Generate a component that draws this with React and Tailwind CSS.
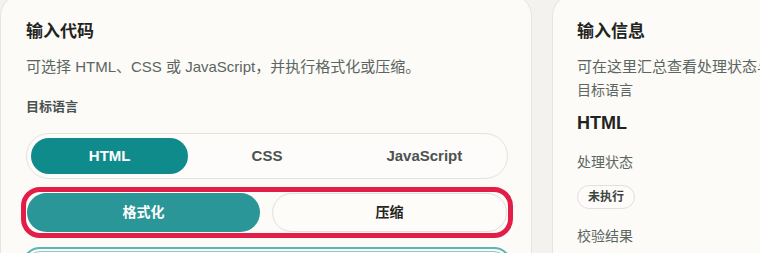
import React from "react";

export default function App() {
  const font = "font-['Liberation_Sans','Noto_Sans_CJK_SC',sans-serif]";
  return (
    <div className={`w-[760px] h-[253px] overflow-hidden bg-[#f3f2ee] ${font}`}>
      <div className="flex gap-[20px] -mt-[6px]">
        {/* Left card */}
        <div className="w-[532px] shrink-0 h-[300px] rounded-[22px] border border-[#e7e5df] bg-[#fcfbf8] px-[25px] pt-[24px]">
          <h2 className="text-[17px] leading-[26px] font-bold text-[#1f2421]">输入代码</h2>
          <p className="mt-[10px] text-[15px] leading-[24px] text-[#5b6561]">
            可选择 HTML、CSS 或 JavaScript，并执行格式化或压缩。
          </p>
          <div className="mt-[18px] text-[13px] leading-[20px] font-semibold text-[#4a524f]">目标语言</div>
          <div className="mt-[16px] w-[482px] rounded-full border border-[#e4e2dc] bg-[#fdfcfa] p-[4px] grid grid-cols-3">
            <button className="h-[36px] rounded-full bg-[#108b8c] text-white text-[15px] font-bold">HTML</button>
            <button className="h-[36px] rounded-full text-[#4b5350] text-[15px] font-bold">CSS</button>
            <button className="h-[36px] rounded-full text-[#4b5350] text-[15px] font-bold">JavaScript</button>
          </div>
          <div className="mt-[13px] w-[482px] flex gap-[12px] p-[1px] rounded-[14px] outline-[5px] outline-solid outline-[#e11d48]">
            <button className="flex-1 h-[39px] rounded-full bg-[#2a9697] text-white text-[14px] font-bold">格式化</button>
            <button className="flex-1 h-[39px] rounded-full border border-[#e2e0da] bg-[#fdfcf9] text-[#1f2421] text-[14px] font-bold">压缩</button>
          </div>
          <div className="mt-[18px] w-[482px] h-[120px] rounded-[14px] border border-[#8ccaca] bg-[#fdfcfa] outline-2 outline-solid outline-offset-2 outline-[#5fb4b4]"></div>
        </div>

        {/* Right card */}
        <div className="w-[300px] shrink-0 h-[300px] rounded-[22px] border border-[#e7e5df] bg-[#fcfbf8] pl-[24px] pt-[24px] overflow-hidden">
          <h2 className="text-[17px] leading-[26px] font-bold text-[#1f2421]">输入信息</h2>
          <p className="mt-[10px] text-[15px] leading-[24px] text-[#5b6561] whitespace-nowrap">
            可在这里汇总查看处理状态与校验结果。
          </p>
          <div className="mt-[1px] text-[14px] leading-[20px] text-[#5d6662]">目标语言</div>
          <div className="mt-[10px] text-[18px] leading-[26px] font-bold text-[#1f2421]">HTML</div>
          <div className="mt-[16px] text-[14px] leading-[20px] text-[#5d6662]">处理状态</div>
          <div className="mt-[13px] inline-flex items-center h-[24px] px-[10px] rounded-full border border-[#e2e0da] bg-[#fdfcfa] text-[12px] font-bold text-[#3d4542]">
            未执行
          </div>
          <div className="mt-[17px] text-[14px] leading-[20px] text-[#5d6662]">校验结果</div>
        </div>
      </div>
    </div>
  );
}
